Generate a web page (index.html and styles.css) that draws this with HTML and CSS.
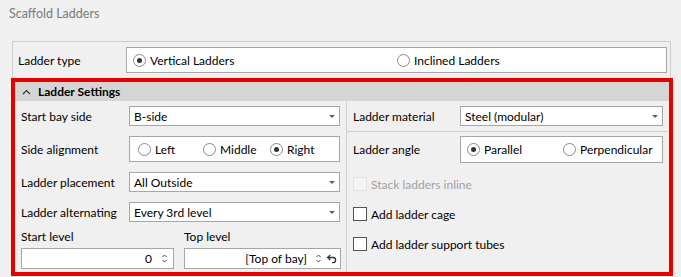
FILE: index.html
```html
<!DOCTYPE html>
<html lang="en">

<head>
    <meta charset="UTF-8">
    <meta name="viewport" content="width=device-width, initial-scale=1.0">
    <title>Scaffold Ladders</title>
    <link rel="stylesheet" href="styles.css">
</head>

<body>

    <div class="title">Scaffold Ladders</div>

    <div class="group">
        <div class="type-row">
            <span class="label">Ladder type</span>
            <div class="radio-box type-box">
                <label class="radio type-first"><span class="dot checked"></span>Vertical Ladders</label>
                <label class="radio"><span class="dot"></span>Inclined Ladders</label>
            </div>
        </div>

        <div class="settings">
            <div class="settings-header">
                <svg class="chevron" width="9" height="6" viewBox="0 0 9 6">
                    <path d="M1 5 L4.5 1.5 L8 5" fill="none" stroke="#333" stroke-width="1.2"/>
                </svg>
                Ladder Settings
            </div>

            <div class="settings-body">
                <!-- Left column -->
                <div class="col col-left">
                    <div class="row">
                        <span class="label">Start bay side</span>
                        <div class="select">B-side<span class="arrow"></span></div>
                    </div>
                    <div class="row">
                        <span class="label">Side alignment</span>
                        <div class="radio-box align-box">
                            <label class="radio align-left"><span class="dot"></span>Left</label>
                            <label class="radio align-mid"><span class="dot"></span>Middle</label>
                            <label class="radio"><span class="dot checked"></span>Right</label>
                        </div>
                    </div>
                    <div class="row">
                        <span class="label">Ladder placement</span>
                        <div class="select">All Outside<span class="arrow"></span></div>
                    </div>
                    <div class="row">
                        <span class="label">Ladder alternating</span>
                        <div class="select">Every 3rd level<span class="arrow"></span></div>
                    </div>
                    <div class="levels">
                        <div class="level start-level">
                            <span class="level-label">Start level</span>
                            <div class="spin">
                                <span class="spin-value">0</span>
                                <svg class="spin-arrows" width="7" height="11" viewBox="0 0 7 11">
                                    <path d="M1.5 4 L3.5 2 L5.5 4 M1.5 7 L3.5 9 L5.5 7" fill="none" stroke="#444" stroke-width="1"/>
                                </svg>
                            </div>
                        </div>
                        <div class="level top-level">
                            <span class="level-label">Top level</span>
                            <div class="spin">
                                <span class="spin-value">[Top of bay]</span>
                                <svg class="spin-arrows" width="7" height="11" viewBox="0 0 7 11">
                                    <path d="M1.5 4 L3.5 2 L5.5 4 M1.5 7 L3.5 9 L5.5 7" fill="none" stroke="#444" stroke-width="1"/>
                                </svg>
                                <svg class="undo" width="11" height="10" viewBox="0 0 11 10">
                                    <path d="M2 3.5 H7 A2.6 2.6 0 0 1 7 8.7 H6" fill="none" stroke="#333" stroke-width="1.3"/>
                                    <path d="M4.3 1 L1.6 3.5 L4.3 6" fill="none" stroke="#333" stroke-width="1.3"/>
                                </svg>
                            </div>
                        </div>
                    </div>
                </div>

                <!-- Right column -->
                <div class="col col-right">
                    <div class="row row-material">
                        <span class="label label-right">Ladder material</span>
                        <div class="select select-right">Steel (modular)<span class="arrow"></span></div>
                    </div>
                    <div class="row row-angle">
                        <span class="label label-right">Ladder angle</span>
                        <div class="radio-box angle-box">
                            <label class="radio angle-first"><span class="dot checked"></span>Parallel</label>
                            <label class="radio"><span class="dot"></span>Perpendicular</label>
                        </div>
                    </div>
                    <label class="check disabled"><span class="box"></span>Stack ladders inline</label>
                    <label class="check"><span class="box"></span>Add ladder cage</label>
                    <label class="check"><span class="box"></span>Add ladder support tubes</label>
                </div>
            </div>
        </div>
    </div>

</body>

</html>
```

FILE: styles.css
```css
/* Basic reset and styling */
* {
    margin: 0;
    padding: 0;
    box-sizing: border-box;
}

body {
    font-family: Lato, "Liberation Sans", sans-serif;
    font-size: 12px;
    color: #000;
    background-color: #f0f0f0;
    width: 681px;
    height: 277px;
    overflow: hidden;
}

.title {
    height: 28px;
    line-height: 28px;
    padding-left: 9px;
    color: #7a7a7a;
    font-size: 12.5px;
}

.group {
    margin: 13px 0 0 12px;
    width: 659px;
    height: 240px;
    border: 1px solid #cdcdcd;
    border-bottom: none;
}

.label {
    width: 108px;
    flex-shrink: 0;
}

.type-row {
    display: flex;
    align-items: center;
    padding: 5px 0 0 5px;
}

.radio-box {
    display: flex;
    align-items: center;
    background-color: white;
    border: 1px solid #a6a6a6;
    padding-left: 6px;
}

.type-box {
    width: 541px;
    height: 26px;
}

.type-first {
    width: 264px;
}

.radio {
    display: flex;
    align-items: center;
}

.dot {
    width: 13px;
    height: 13px;
    border: 1px solid #8a8a8a;
    border-radius: 50%;
    background-color: white;
    margin-right: 4px;
    display: flex;
    align-items: center;
    justify-content: center;
}

.dot.checked::after {
    content: "";
    width: 5px;
    height: 5px;
    border-radius: 50%;
    background-color: #333;
}

/* Red highlighted settings section */
.settings {
    margin: 5px 0 0 -2px;
    width: 662px;
    height: 198px;
    border: 4px solid #e60000;
}

.settings-header {
    height: 19px;
    background-color: #d5d5d5;
    display: flex;
    align-items: center;
    font-weight: bold;
    padding-left: 7px;
}

.chevron {
    margin-right: 7px;
}

.settings-body {
    display: flex;
    height: 171px;
}

.col {
    display: flex;
    flex-direction: column;
}

.col-left {
    width: 332px;
    padding: 5px 0 0 6px;
    gap: 10px;
    border-right: 1px solid #cfcfcf;
}

.row {
    display: flex;
    align-items: center;
}

.select {
    width: 211px;
    height: 20px;
    background-color: white;
    border: 1px solid #a6a6a6;
    padding-left: 4px;
    display: flex;
    align-items: center;
    position: relative;
}

.arrow {
    position: absolute;
    right: 4px;
    top: 8px;
    border-left: 3px solid transparent;
    border-right: 3px solid transparent;
    border-top: 3px solid #606060;
}

.align-box {
    width: 211px;
    height: 26px;
    padding-left: 8px;
}

.align-left {
    width: 65px;
}

.align-mid {
    width: 67px;
}

.levels {
    display: flex;
    gap: 10px;
    margin-top: -2px;
}

.level {
    display: flex;
    flex-direction: column;
    gap: 4px;
}

.level-label {
    line-height: 14px;
}

.start-level {
    width: 153px;
}

.top-level {
    width: 157px;
}

.spin {
    height: 21px;
    background-color: white;
    border: 1px solid #a6a6a6;
    display: flex;
    align-items: center;
    justify-content: flex-end;
    padding-right: 5px;
}

.start-level .spin {
    padding-right: 5px;
}

.spin-arrows {
    margin-left: 9px;
}

.top-level .spin {
    padding-right: 3px;
}

.top-level .spin-arrows {
    margin-left: 8px;
}

.undo {
    margin-left: 4px;
}

.col-right {
    width: 321px;
}

.row-material {
    padding: 5px 0 5px 6px;
    border-bottom: 1px solid #cfcfcf;
}

.label-right {
    width: 107px;
}

.select-right {
    width: 203px;
}

.row-angle {
    padding: 4px 0 0 6px;
}

.angle-box {
    width: 203px;
    height: 27px;
}

.angle-first {
    width: 96px;
}

.check {
    display: flex;
    align-items: center;
    padding-left: 6px;
    height: 30px;
}

.row-angle + .check {
    margin-top: 6px;
}

.box {
    width: 14px;
    height: 14px;
    border: 1px solid #555;
    background-color: white;
    margin-right: 4px;
}

.check.disabled {
    color: #a0a0a0;
}

.check.disabled .box {
    border-color: #e0e0e0;
    background-color: #f4f4f4;
}
```
